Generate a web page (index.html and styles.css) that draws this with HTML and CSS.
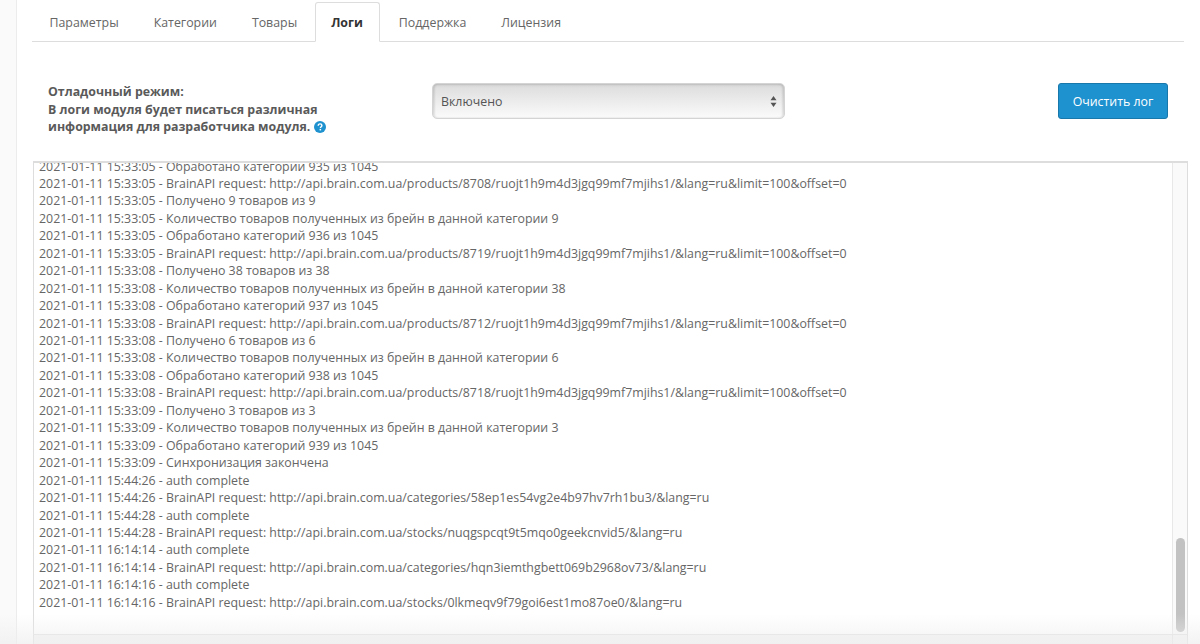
FILE: index.html
```html
<!DOCTYPE html>
<html lang="ru">
<head>
<meta charset="utf-8">
<title>Логи</title>
<link rel="stylesheet" href="styles.css">
</head>
<body>
<div class="panel">
  <ul class="tabs">
    <li class="tab">Параметры</li>
    <li class="tab">Категории</li>
    <li class="tab">Товары</li>
    <li class="tab active">Логи</li>
    <li class="tab">Поддержка</li>
    <li class="tab">Лицензия</li>
  </ul>
  <div class="form-row">
    <label class="label">Отладочный режим:<br>В логи модуля будет писаться различная<br>информация для разработчика модуля. <svg class="help" viewBox="0 0 12 12" width="12" height="12"><circle cx="6" cy="6" r="6" fill="#1e91cf"/><path d="M4.2 4.7c0-1.1.8-1.8 1.9-1.8s1.8.7 1.8 1.6c0 1.3-1.5 1.3-1.5 2.6" fill="none" stroke="#fff" stroke-width="1.4"/><rect x="5.6" y="7.9" width="1.5" height="1.5" fill="#fff"/></svg></label>
    <div class="select"><span>Включено</span><svg class="arrows" viewBox="0 0 7 11" width="7" height="11"><path d="M3.5 0L6.5 4.3H.5zM3.5 11L.5 6.7H6.5z" fill="#555"/></svg></div>
    <button class="btn">Очистить лог</button>
  </div>
  <div class="logbox">
    <div class="log"><div class="lines">
      <div>2021-01-11 15:33:05 - Обработано категорий 935 из 1045</div>
      <div>2021-01-11 15:33:05 - BrainAPI request: http://api.brain.com.ua/products/8708/ruojt1h9m4d3jgq99mf7mjihs1/&amp;lang=ru&amp;limit=100&amp;offset=0</div>
      <div>2021-01-11 15:33:05 - Получено 9 товаров из 9</div>
      <div>2021-01-11 15:33:05 - Количество товаров полученных из брейн в данной категории 9</div>
      <div>2021-01-11 15:33:05 - Обработано категорий 936 из 1045</div>
      <div>2021-01-11 15:33:05 - BrainAPI request: http://api.brain.com.ua/products/8719/ruojt1h9m4d3jgq99mf7mjihs1/&amp;lang=ru&amp;limit=100&amp;offset=0</div>
      <div>2021-01-11 15:33:08 - Получено 38 товаров из 38</div>
      <div>2021-01-11 15:33:08 - Количество товаров полученных из брейн в данной категории 38</div>
      <div>2021-01-11 15:33:08 - Обработано категорий 937 из 1045</div>
      <div>2021-01-11 15:33:08 - BrainAPI request: http://api.brain.com.ua/products/8712/ruojt1h9m4d3jgq99mf7mjihs1/&amp;lang=ru&amp;limit=100&amp;offset=0</div>
      <div>2021-01-11 15:33:08 - Получено 6 товаров из 6</div>
      <div>2021-01-11 15:33:08 - Количество товаров полученных из брейн в данной категории 6</div>
      <div>2021-01-11 15:33:08 - Обработано категорий 938 из 1045</div>
      <div>2021-01-11 15:33:08 - BrainAPI request: http://api.brain.com.ua/products/8718/ruojt1h9m4d3jgq99mf7mjihs1/&amp;lang=ru&amp;limit=100&amp;offset=0</div>
      <div>2021-01-11 15:33:09 - Получено 3 товаров из 3</div>
      <div>2021-01-11 15:33:09 - Количество товаров полученных из брейн в данной категории 3</div>
      <div>2021-01-11 15:33:09 - Обработано категорий 939 из 1045</div>
      <div>2021-01-11 15:33:09 - Синхронизация закончена</div>
      <div>2021-01-11 15:44:26 - auth complete</div>
      <div>2021-01-11 15:44:26 - BrainAPI request: http://api.brain.com.ua/categories/58ep1es54vg2e4b97hv7rh1bu3/&amp;lang=ru</div>
      <div>2021-01-11 15:44:28 - auth complete</div>
      <div>2021-01-11 15:44:28 - BrainAPI request: http://api.brain.com.ua/stocks/nuqgspcqt9t5mqo0geekcnvid5/&amp;lang=ru</div>
      <div>2021-01-11 16:14:14 - auth complete</div>
      <div>2021-01-11 16:14:14 - BrainAPI request: http://api.brain.com.ua/categories/hqn3iemthgbett069b2968ov73/&amp;lang=ru</div>
      <div>2021-01-11 16:14:16 - auth complete</div>
      <div>2021-01-11 16:14:16 - BrainAPI request: http://api.brain.com.ua/stocks/0lkmeqv9f79goi6est1mo87oe0/&amp;lang=ru</div>
    </div></div>
    <div class="vtrack"><div class="thumb"></div></div>
    <div class="htrack"></div>
    <div class="corner"></div>
  </div>
</div>
<div class="fade"></div>
</body>
</html>
```
FILE: styles.css
```css
* { box-sizing: border-box; }
html, body { margin: 0; height: 644px; overflow: hidden; }
body {
  background: #fff;
  font-family: "Open Sans", sans-serif;
  font-size: 12.37px;
  color: #666;
  padding-left: 16px;
  position: relative;
}
body::before {
  content: "";
  position: absolute;
  left: 0; top: 0; bottom: 0;
  width: 16px;
  background: #fafafa;
}
.panel {
  border-left: 1px solid #ececec;
  height: 644px;
  padding: 2px 12px 0 16px;
}
.tabs {
  list-style: none;
  margin: 0 4px 0 -1px;
  padding: 0;
  display: flex;
  height: 40px;
  border-bottom: 1px solid #ddd;
}
.tab {
  padding: 0 17.5px;
  height: 40px;
  line-height: 41px;
  color: #666;
  white-space: nowrap;
}
.active {
  border: 1px solid #ddd;
  border-bottom: 1px solid #fff;
  border-radius: 3px 3px 0 0;
  background: #fff;
  font-weight: 700;
  color: #333;
  padding: 0 16.5px 0 15.5px;
  margin-right: 1px;
  line-height: 40px;
  height: 40px;
}
.form-row {
  display: flex;
  align-items: flex-start;
  height: 119px;
  padding: 41px 0 0 15px;
  position: relative;
}
.label {
  width: 384px;
  flex: none;
  font-weight: 700;
  line-height: 17.5px;
  color: #5a5a5a;
}
.help { vertical-align: -2px; margin-left: 1px; }
.select {
  width: 353px;
  height: 36px;
  flex: none;
  border: 1px solid #d4d4d4;
  border-radius: 5px;
  background: linear-gradient(#dcdcdc, #fbfbfb);
  box-shadow: inset 0 1px 3px rgba(0,0,0,.12), inset 2px 0 2px rgba(0,0,0,.07), inset -2px 0 2px rgba(0,0,0,.07);
  display: flex;
  align-items: center;
  justify-content: space-between;
  padding: 0 7px 0 8px;
  color: #555;
}
.btn {
  margin-left: 273px;
  width: 110px;
  height: 36px;
  flex: none;
  border: 1px solid #1978ab;
  border-radius: 3px;
  background: #1e91cf;
  color: #fff;
  font: 12.37px "Open Sans", sans-serif;
  padding: 0;
}
.logbox {
  display: grid;
  grid-template-columns: 1fr 15px;
  grid-template-rows: 471px 20px;
  width: 1155px;
  border: 1px solid #ddd;
  border-top: 2px solid #ddd;
  border-bottom: 0;
}
.log { overflow: hidden; padding: 0 0 0 5px; }
.lines { margin-top: -5.5px; line-height: 17.46px; white-space: nowrap; color: #666; }
.vtrack {
  background: #fafafa;
  border-left: 1px solid #e8e8e8;
  display: flex;
  align-items: flex-end;
  justify-content: center;
  padding-bottom: 2px;
}
.thumb { width: 9px; height: 94px; border-radius: 5px; background: #c2c2c2; }
.htrack { background: #f5f5f5; border-top: 1px solid #e2e2e2; }
.corner { background: #f5f5f5; border-top: 1px solid #e2e2e2; border-left: 1px solid #e2e2e2; }
.fade {
  position: absolute;
  left: 0; right: 0; bottom: 0;
  height: 30px;
  background: linear-gradient(rgba(238,238,238,0), rgba(238,238,238,.7));
  pointer-events: none;
}
```
